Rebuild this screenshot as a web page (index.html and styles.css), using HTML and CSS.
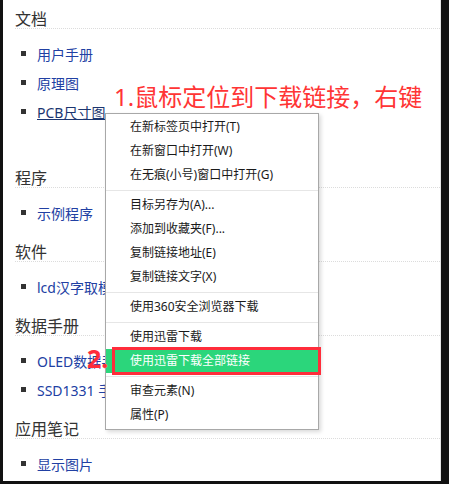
FILE: index.html
```html
<!DOCTYPE html>
<html lang="zh-CN">
<head>
    <meta charset="UTF-8">
    <title>资料下载</title>
    <link rel="stylesheet" href="styles.css">
</head>
<body>
    <div class="page">
        <div class="section first">
            <h2 class="sec-title">文档</h2>
            <ul class="links">
                <li><a href="#">用户手册</a></li>
                <li><a href="#">原理图</a></li>
                <li><a href="#" class="hover">PCB尺寸图</a></li>
            </ul>
        </div>
        <div class="section">
            <h2 class="sec-title">程序</h2>
            <ul class="links">
                <li><a href="#">示例程序</a></li>
            </ul>
        </div>
        <div class="section">
            <h2 class="sec-title">软件</h2>
            <ul class="links">
                <li><a href="#">lcd汉字取模软件</a></li>
            </ul>
        </div>
        <div class="section">
            <h2 class="sec-title">数据手册</h2>
            <ul class="links">
                <li><a href="#">OLED数据手册</a></li>
                <li><a href="#">SSD1331 手册</a></li>
            </ul>
        </div>
        <div class="section">
            <h2 class="sec-title">应用笔记</h2>
            <ul class="links">
                <li><a href="#">显示图片</a></li>
            </ul>
        </div>

        <!-- right-click menu -->
        <div class="ctx-menu">
            <div class="ctx-item">在新标签页中打开(T)</div>
            <div class="ctx-item">在新窗口中打开(W)</div>
            <div class="ctx-item">在无痕(小号)窗口中打开(G)</div>
            <div class="ctx-sep"></div>
            <div class="ctx-item">目标另存为(A)...</div>
            <div class="ctx-item">添加到收藏夹(F)...</div>
            <div class="ctx-item">复制链接地址(E)</div>
            <div class="ctx-item">复制链接文字(X)</div>
            <div class="ctx-sep"></div>
            <div class="ctx-item">使用360安全浏览器下载</div>
            <div class="ctx-sep"></div>
            <div class="ctx-item">使用迅雷下载</div>
            <div class="ctx-item active">使用迅雷下载全部链接</div>
            <div class="ctx-sep"></div>
            <div class="ctx-item">审查元素(N)</div>
            <div class="ctx-item">属性(P)</div>
        </div>

        <!-- annotations -->
        <div class="note note-1">1.鼠标定位到下载链接，右键</div>
        <div class="note note-2">2.</div>
        <div class="mark-box"></div>
    </div>
</body>
</html>
```

FILE: styles.css
```css
* {
    margin: 0;
    padding: 0;
    box-sizing: border-box;
}

body {
    background-color: #111;
    font-family: "Noto Sans", "Noto Sans CJK SC", sans-serif;
    width: 449px;
    height: 484px;
    overflow: hidden;
}

.page {
    position: relative;
    margin-left: 3px;
    width: 438px;
    height: 481px;
    background: white;
    border-right: 1px solid #e4e4e4;
    padding: 11px 0 0 12px;
    overflow: hidden;
}

.section {
    margin-bottom: 17px;
}

.section.first {
    margin-bottom: 44px;
}

.sec-title {
    font-size: 16px;
    font-weight: normal;
    line-height: 17px;
    color: #333;
    border-bottom: 1px dotted #dcdcdc;
}

.links {
    list-style: none;
    margin-top: 10px;
}

.links li {
    display: flex;
    align-items: center;
    height: 29px;
    font-size: 14px;
}

.links li::before {
    content: "";
    width: 5px;
    height: 5px;
    background: #333;
    margin-left: 6px;
    margin-right: 11px;
}

.links a {
    color: #2140a3;
    text-decoration: none;
    white-space: nowrap;
}

.links a.hover {
    color: #1b3570;
    text-decoration: underline;
}

.ctx-menu {
    position: absolute;
    left: 102px;
    top: 113px;
    width: 214px;
    height: 317px;
    background: white;
    border: 1px solid #a8a8a8;
    box-shadow: 2px 2px 4px rgba(0, 0, 0, 0.15);
    padding-top: 1px;
}

.ctx-item {
    height: 24px;
    line-height: 24px;
    padding-left: 24px;
    font-size: 12px;
    color: #1a1a1a;
    white-space: nowrap;
}

.ctx-item.active {
    background-color: #2bd67b;
    color: white;
}

.ctx-sep {
    height: 6px;
    display: flex;
    align-items: center;
}

.ctx-sep::after {
    content: "";
    flex: 1;
    height: 1px;
    background: #e6e6e6;
}

.note {
    position: absolute;
    color: #ff3535;
    font-size: 24px;
    line-height: 24px;
    white-space: nowrap;
}

.note-1 {
    left: 111px;
    top: 85px;
}

.note-2 {
    left: 84px;
    top: 346px;
    font-size: 25px;
    font-weight: bold;
    color: #ff2d3b;
}

.mark-box {
    position: absolute;
    left: 109px;
    top: 347px;
    width: 209px;
    height: 28px;
    border: 3px solid #ff2d3b;
}
```
